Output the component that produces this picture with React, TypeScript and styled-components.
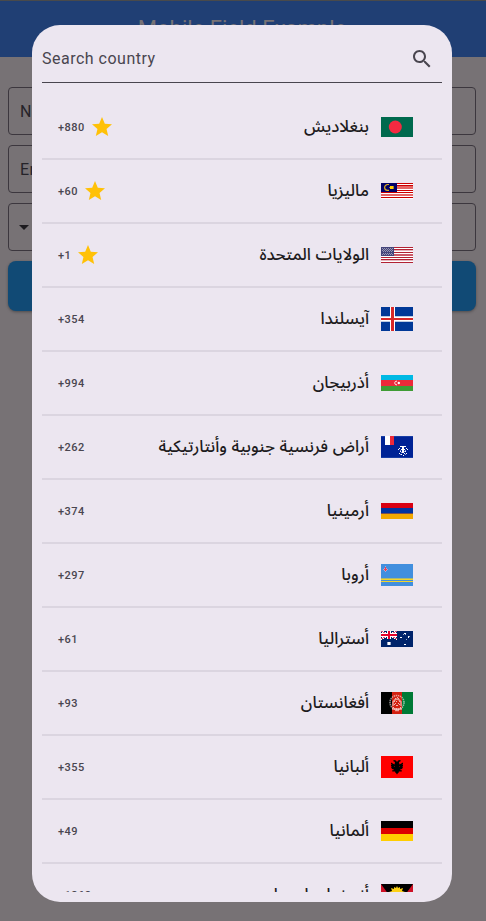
import React from 'react';
import styled, { createGlobalStyle } from 'styled-components';

const GlobalStyle = createGlobalStyle`
  * { box-sizing: border-box; }
  body { margin: 0; background: #777275; font-family: Roboto, sans-serif; overflow: hidden; }
`;

const Page = styled.div`
  height: 921px;
  display: flex;
  flex-direction: column;
  overflow: hidden;
`;

const AppBar = styled.header`
  height: 57px;
  flex: none;
  display: flex;
  align-items: center;
  justify-content: center;
  padding: 0 2px 1px 0;
  border-top: 1px solid #494a4b;
  background: #203f74;
  color: #777275;
  font-size: 22px;
  line-height: 28px;
`;

const Form = styled.div`
  display: flex;
  flex-direction: column;
  gap: 10px;
  padding: 30px 10px 0 8px;
`;

const Field = styled.div`
  height: 48px;
  display: flex;
  align-items: center;
  padding-left: 11px;
  border: 1px solid #3c373e;
  border-radius: 4px;
  color: #252329;
  font-size: 16px;
  letter-spacing: 0.5px;
`;

const DropArrow = styled.svg`
  width: 24px;
  height: 24px;
  margin-left: -8px;
  fill: #1d1b1f;
`;

const SubmitButton = styled.div`
  height: 50px;
  border-radius: 8px;
  background: #114a75;
  box-shadow: 0 1px 3px rgba(0, 0, 0, 0.35);
`;

const Dialog = styled.section`
  position: absolute;
  left: 32px;
  top: 25px;
  width: 420px;
  height: 877px;
  padding: 10px;
  border-radius: 28px;
  background: #ece6f0;
  display: flex;
  flex-direction: column;
`;

const SearchBar = styled.div`
  height: 48px;
  flex: none;
  display: flex;
  align-items: center;
  justify-content: space-between;
  padding-right: 8px;
  border-bottom: 1px solid #49454f;
  color: #49454f;
  font-size: 16px;
  letter-spacing: 0.5px;
`;

const Icon = styled.svg<{ $color: string }>`
  width: 24px;
  height: 24px;
  flex: none;
  fill: ${(p) => p.$color};
`;

const CountryList = styled.div`
  flex: 1;
  min-height: 0;
  margin-top: 13px;
  overflow: hidden;
`;

const CountryRow = styled.div`
  height: 64px;
  display: flex;
  align-items: center;
  padding: 0 29px 0 16px;
  border-bottom: 2px solid #dbd5e0;
`;

const DialCode = styled.span`
  margin-right: 5px;
  color: #49454f;
  font-size: 11px;
  font-weight: 500;
  letter-spacing: 0.5px;
`;

const CountryName = styled.span`
  flex: 1;
  margin-right: 12px;
  color: #1d1b20;
  font-family: 'Noto Sans Arabic', 'Noto Sans', 'DejaVu Sans', sans-serif;
  font-size: 16.6px;
  font-weight: 500;
  word-spacing: 0.3px;
  line-height: 24px;
  white-space: nowrap;
`;

const FlagSvg = styled.svg`
  width: 32px;
  flex: none;
  display: block;
`;

type FlagProps = { h: number; children: React.ReactNode };
const Flag = ({ h, children }: FlagProps) => (
  <FlagSvg height={h} viewBox={`0 0 32 ${h}`} shapeRendering="crispEdges">{children}</FlagSvg>
);

const STAR = 'M12 17.27 18.18 21l-1.64-7.03L22 9.24l-7.19-.61L12 2 9.19 8.63 2 9.24l5.46 4.73L5.82 21z';
const SEARCH = 'M15.5 14h-.79l-.28-.27C15.41 12.59 16 11.11 16 9.5 16 5.91 13.09 3 9.5 3S3 5.91 3 9.5 5.91 16 9.5 16c1.61 0 3.09-.59 4.23-1.57l.27.28v.79l5 4.99L20.49 19l-4.99-5zm-6 0C7.01 14 5 11.99 5 9.5S7.01 5 9.5 5 14 7.01 14 9.5 11.99 14 9.5 14z';

/* Small pixel clusters are given as "x,y" pairs. */
const Dots = ({ at, fill }: { at: string; fill: string }) => (
  <path fill={fill} d={at.split(' ').map((p) => `M${p}h1v1h-1z`).join('')} />
);

const flags = {
  bd: <Flag h={20}><path fill="#006a4e" d="M0 0h32v20H0z" /><circle cx="14.3" cy="10" r="6.5" fill="#f42a41" shapeRendering="auto" /></Flag>,
  my: (
    <Flag h={16}>
      <path fill="#fff" d="M0 0h32v16H0z" />
      <path fill="#cc0001" d="M0 0h32v1H0zM0 2h32v1H0zM0 7h32v1H0zM0 9h32v1H0zM0 14h32v1H0z" />
      <path fill="#e56666" d="M0 3h32v2H0zM0 5h32v1H0zM0 11h32v2H0z" />
      <path fill="#fff" d="M16 6h16v1H16z" />
      <path fill="#010066" d="M0 0h16v9H0z" />
      <path fill="none" stroke="#d6aa20" strokeWidth="1.2" shapeRendering="auto" d="M8 1.5H6.3Q3.5 2.3 3.6 4.6T6.3 7.4H8" />
      <path fill="#fc0" d="M9 3h3v3H9z" /><path fill="#9d8228" d="M8 4h1v1H8zM12 3h1v3h-1z" />
    </Flag>
  ),
  us: (
    <Flag h={16}>
      <path fill="#fff" d="M0 0h32v16H0z" />
      <path fill="#b22234" d="M0 0h32v1H0zM0 2h32v1H0zM0 5h32v1H0zM0 10h32v1H0zM0 12h32v1H0zM0 15h32v1H0z" />
      <path fill="#ca5b6a" d="M0 7h32v2H0z" />
      <path fill="#e5b3bb" d="M0 3h32v1H0zM0 13h32v1H0z" />
      <path fill="#45457b" d="M0 0h13v9H0z" />
      <Dots fill="#9898b4" at="1,1 3,1 5,1 7,1 9,1 11,1 2,2 4,2 6,2 8,2 10,2 1,3 3,3 5,3 7,3 9,3 11,3 2,4 4,4 6,4 8,4 10,4 2,6 4,6 6,6 8,6 10,6 1,7 3,7 5,7 7,7 9,7 11,7" />
    </Flag>
  ),
  is: (
    <Flag h={24}>
      <path fill="#003897" d="M0 0h32v24H0z" />
      <path fill="#bac9e1" d="M0 9h32v1H0zM0 14h32v1H0z" />
      <path fill="#fff" d="M9 0h5v24H9zM0 10h32v1H0zM0 13h32v1H0z" />
      <path fill="#d72828" d="M10 0h3v24h-3zM0 11h32v2H0z" />
    </Flag>
  ),
  az: (
    <Flag h={16}>
      <path fill="#00b9e4" d="M0 0h32v5H0z" /><path fill="#ed2939" d="M0 5h32v6H0z" /><path fill="#3f9c35" d="M0 11h32v5H0z" />
      <path fill="none" stroke="#fff" strokeWidth=".9" shapeRendering="auto" d="M16 6.2c-3-.7-3 4.2 0 3.6" />
      <circle cx="17.8" cy="8" r="1.2" fill="#fff" shapeRendering="auto" />
    </Flag>
  ),
  tf: (
    <Flag h={22}>
      <path fill="#002395" d="M0 0h32v22H0z" /><path fill="#183da5" d="M0 0h32v1H0zM0 21h32v1H0z" />
      <path fill="#fff" d="M4 0h5v9H4zM19 10h6v1h-6zM21 11h2v2h-2zM20 13h4v1h-4zM21 14h2v3h-2z" /><path fill="#ed2939" d="M9 0h4v9H9z" />
      <Dots fill="#fff" at="18,12 25,12 17,13 26,13 19,15 24,15 18,17 25,17 20,18 23,17 22,19" />
      <Dots fill="#8d9cd0" at="19,14 24,14 20,16 23,15 19,18 24,18" />
    </Flag>
  ),
  am: <Flag h={16}><path fill="#d90012" d="M0 0h32v5H0z" /><path fill="#0033a0" d="M0 5h32v6H0z" /><path fill="#f2a800" d="M0 11h32v5H0z" /><path fill="#794e50" d="M0 10h32v1H0z" /></Flag>,
  aw: (
    <Flag h={22}>
      <path fill="#418fde" d="M0 0h32v22H0z" /><path fill="#a5b779" d="M0 14h32v1H0z" /><path fill="#f2d42c" d="M0 15h32v1H0zM0 17h32v1H0z" />
      <Dots fill="#b5a5cf" at="4,2 4,7 2,5 6,5 3,4 5,4 3,6 5,6" /><path fill="#ef3c50" d="M4 3h1v4H4zM3 5h3v1H3z" />
    </Flag>
  ),
  au: (
    <Flag h={16}>
      <path fill="#00246b" d="M0 0h32v16H0z" />
      <path stroke="#fff" strokeWidth="2" d="m0 0 16 8M16 0 0 8" />
      <path stroke="#cc234c" strokeWidth=".8" d="m0 0 16 8M16 0 0 8" />
      <path fill="#fff" d="M6 0h4v8H6zM0 2h16v4H0z" /><path fill="#e4002b" d="M7 0h2v8H7zM0 3h16v2H0z" />
      <path fill="#fff" d="M7 11h2v3H7zM23 2h2v1h-2zM27 5h1v2h-1zM19 6h2v1h-2zM23 13h2v1h-2z" />
      <Dots fill="#9daccc" at="6,11 9,11 6,13 9,13 6,12 9,12 22,3 24,3 28,5 25,8" />
    </Flag>
  ),
  af: (
    <Flag h={22}>
      <path d="M0 0h11v22H0z" /><path fill="#d32011" d="M11 0h10v22H11z" /><path fill="#007a36" d="M21 0h11v22H21z" />
      <g fill="none" stroke="#fff" strokeOpacity=".55" shapeRendering="auto">
        <ellipse cx="16" cy="10.5" rx="7" ry="7" strokeWidth="1.6" strokeDasharray="1.4 .7" />
        <path strokeWidth="1.5" d="M12 14v-4q4-6 8 0v4M11 17h10M14 18.5h4" />
      </g>
      <Dots fill="#f0b8b3" at="14,6 16,5 17,6 13,9 15,9 18,9 14,11 17,11 18,12 13,12 15,13 16,13 12,15 19,15 15,16" />
    </Flag>
  ),
  al: (
    <Flag h={22}>
      <path fill="red" d="M0 0h32v22H0z" />
      <path shapeRendering="auto" d="m16 6-1-1.5-2-.5-1 1 2 1-.5 2.5L10 6.500V11l1 2 2 .5-2 2h3l2 3 2-3h3l-2-2 2-.5 1-2V6.500l-3.500 2L18 6l2-1-1-1-2 .5z" />
      <Dots fill="#650000" at="10,8 21,8 10,10 21,10 11,14 20,14 14,16 17,16 13,10 18,10" />
    </Flag>
  ),
  de: <Flag h={20}><path d="M0 0h32v7H0z" /><path fill="#d00" d="M0 7h32v6H0z" /><path fill="#ffce00" d="M0 13h32v7H0z" /></Flag>,
  ag: (
    <Flag h={22}>
      <path fill="#ce1126" d="M0 0h32v22H0z" /><path shapeRendering="auto" d="M0 0h32L16 22z" />
      <g shapeRendering="auto"><path fill="#fcd116" d="m16 2 1 2 2-1v2l3-1-1 3 3 1H8l3-1-1-3 3 1V3l2 1z" /><circle cx="16" cy="9" r="5" fill="#fcd116" /></g>
      <path fill="#0072c6" d="M6 9h20v4H6z" /><path fill="#fff" d="m9 13h14l-7 9z" />
    </Flag>
  ),
};

type Country = { code: string; name: string; flag: keyof typeof flags; favorite?: boolean };
const countries: Country[] = [
  { code: '+880', name: 'بنغلاديش', flag: 'bd', favorite: true },
  { code: '+60', name: 'ماليزيا', flag: 'my', favorite: true },
  { code: '+1', name: 'الولايات المتحدة', flag: 'us', favorite: true },
  { code: '+354', name: 'آيسلندا', flag: 'is' },
  { code: '+994', name: 'أذربيجان', flag: 'az' },
  { code: '+262', name: 'أراض فرنسية جنوبية وأنتارتيكية', flag: 'tf' },
  { code: '+374', name: 'أرمينيا', flag: 'am' },
  { code: '+297', name: 'أروبا', flag: 'aw' },
  { code: '+61', name: 'أستراليا', flag: 'au' },
  { code: '+93', name: 'أفغانستان', flag: 'af' },
  { code: '+355', name: 'ألبانيا', flag: 'al' },
  { code: '+49', name: 'ألمانيا', flag: 'de' },
  { code: '+1268', name: 'أنتيغوا وباربودا', flag: 'ag' },
];

export default function App() {
  return (
    <>
      <GlobalStyle />
      <Page>
        <AppBar>Mobile Field Example</AppBar>
        <Form>
          <Field>Name</Field>
          <Field>Email</Field>
          <Field><DropArrow viewBox="0 0 24 24"><path d="m7 10 5 5 5-5z" /></DropArrow></Field>
          <SubmitButton />
        </Form>
      </Page>
      <Dialog>
        <SearchBar>
          Search country
          <Icon $color="#49454f" viewBox="0 0 24 24"><path d={SEARCH} /></Icon>
        </SearchBar>
        <CountryList>
          {countries.map((c) => (
            <CountryRow key={c.code}>
              <DialCode>{c.code}</DialCode>
              {c.favorite && <Icon $color="#ffc107" viewBox="0 0 24 24"><path d={STAR} /></Icon>}
              <CountryName dir="rtl" lang="ar">{c.name}</CountryName>
              {flags[c.flag]}
            </CountryRow>
          ))}
        </CountryList>
      </Dialog>
    </>
  );
}
